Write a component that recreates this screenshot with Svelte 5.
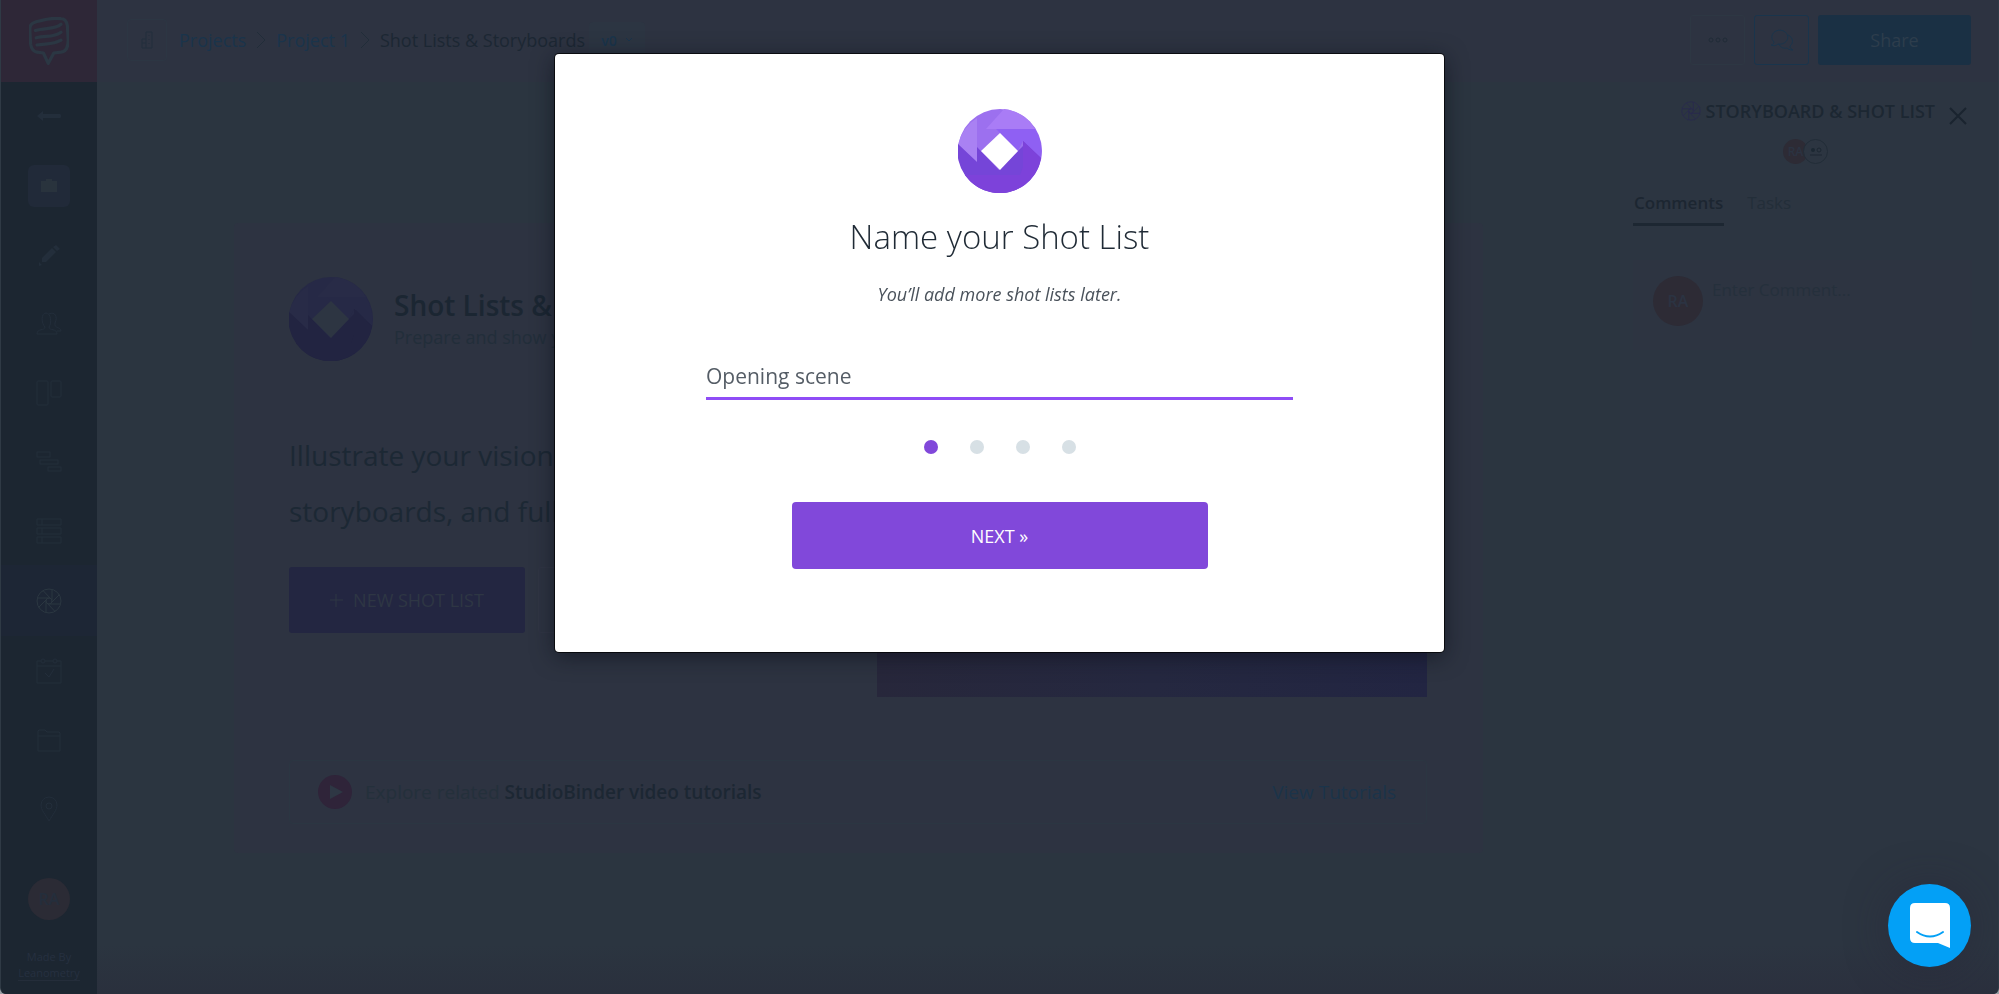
<script>
  let shotListName = $state('Opening scene');
  let step = $state(0);

  const steps = ['Name', 'Format', 'Import', 'Finish'];
  const crumbs = ['Projects', 'Project 1'];
  const navItems = [
    'back',
    'project',
    'write',
    'contacts',
    'boards',
    'timeline',
    'breakdown',
    'shots',
    'calendar',
    'files',
    'locations'
  ];

  function next() {
    step = Math.min(step + 1, steps.length - 1);
  }
</script>

{#snippet aperture()}
  <circle cx="13" cy="13" r="12" />
  <circle cx="13" cy="13" r="3" />
  <path d="M16 12V1.5M15 15 23.5 6.5M13 16H24.5M11 15l8 8.5M10 13v11.5M11 11 2.5 19.5M13 10H1.5M15 11 7 2.5" />
{/snippet}

{#snippet badge()}
  <circle class="tone-a" cx="42" cy="42" r="42" />
  <path class="tone-b" d="M0 36 19 53V9A42 42 0 0 0 0 36Z" />
  <path class="tone-c" d="M28 20H77A42 42 0 0 0 46 0Z" />
  <path class="tone-d" d="M38 20H77A42 42 0 0 1 83 49L65 32 60 42 42 24Z" />
  <path class="tone-e" d="M0 35 19 53V38L41 61 65 37V32L83 49A42 42 0 0 1 0 35Z" />
  <path class="tone-f" d="M7 66H37L62 66 65 58V32L83 49A42 42 0 0 1 7 66Z" />
  <path class="hole" d="M42 24 60 42 42 61 23 42Z" />
{/snippet}

<div class="app">
  <aside class="sidebar">
    <a class="brand" href="#home" aria-label="StudioBinder">
      <svg width="50" height="60" viewBox="0 0 50 60">
        <path d="M9 6C19 3 32 1 40 2c5 0 7 3 8 9l1 18c0 10-3 14-9 15l-9 1-7 13-6-13-8-1C6 43 3 40 2 34L1 16C1 10 3 8 9 6Z" />
        <path d="M8 17c12-4 24-1 32-8M9 26c12-3 22 0 31-7M10 35c11-2 20 0 30-6" />
      </svg>
    </a>
    <nav>
      {#each navItems as item}
        <a class="nav-item" class:active={item === 'shots'} class:boxed={item === 'project'} href="#{item}" aria-label={item}>
          <svg width="26" height="26" viewBox="0 0 26 26">
            {#if item === 'back'}
              <path class="fill" d="M1 12 7 7v3h17q1 0 1 2t-1 2H7v3Z" />
            {:else if item === 'project'}
              <path class="fill" d="M5 8h5V6h6v2h5v5H5ZM5 13h16v6H5Z" />
            {:else if item === 'write'}
              <path class="fill" d="M6 16 16 6l4 4L10 20H6ZM17 5l3-2 4 4-3 2ZM3 20l3 3-3 1Z" />
            {:else if item === 'contacts'}
              <path d="M1 23c0-6 8-3 8-7C5 12 5 2 10 2s6 10 3 14c0 4 8 1 8 7ZM13 3c6-3 9 3 6 9-1 6 5 3 6 8h-4" />
            {:else if item === 'boards'}
              <rect x="1" y="1" width="11" height="24" rx="1" />
              <rect x="15" y="1" width="10" height="16" rx="1" />
            {:else if item === 'timeline'}
              <rect x="1" y="3" width="13" height="5" />
              <rect x="4" y="11" width="18" height="4" />
              <rect x="12" y="18" width="13" height="4" />
            {:else if item === 'breakdown'}
              <path d="M1 1h24v6H1ZM1 10h24v6H1ZM1 19h24v6H1ZM6 1v6M6 10v6M6 19v6" />
            {:else if item === 'shots'}
              {@render aperture()}
            {:else if item === 'calendar'}
              <path d="M1 3h4M9 3h8M21 3h4v22H1V3M1 8h24M9 15l4 4 5-8" />
              <circle cx="7" cy="3" r="2" />
              <circle cx="19" cy="3" r="2" />
            {:else if item === 'files'}
              <path d="M2 24V4l1-1h6l2 2h12l1 1v18ZM2 9h22" />
            {:else}
              <path d="M13 25C9 18 5 14 5 9a8 8 0 0 1 16 0c0 5-4 9-8 16Z" />
              <circle cx="13" cy="10" r="3" />
            {/if}
          </svg>
        </a>
      {/each}
    </nav>
    <div class="avatar user">RA</div>
    <p class="made-by">Made By<br /><a href="#leanometry">Leanometry</a></p>
  </aside>

  <div class="workspace">
    <header class="topbar">
      <button class="building" aria-label="Company">
        <svg width="12" height="18" viewBox="0 0 12 18">
          <path d="M5 17V1h6v16ZM1 17V8h4M1 12h4M8 4v1M8 8v1M8 12v1M1 17h4" />
        </svg>
      </button>
      <nav class="crumbs">
        {#each crumbs as crumb}
          <a href="#projects">{crumb}</a>
          <svg width="10" height="18" viewBox="0 0 10 18"><path d="m1 1 8 8-8 8" /></svg>
        {/each}
        <span>Shot Lists &amp; Storyboards</span>
      </nav>
      <button class="version">
        v0
        <svg width="8" height="6" viewBox="0 0 8 6"><path d="m1 1 3 3 3-3" /></svg>
      </button>
      <div class="actions">
        <button class="more" aria-label="More">
          <svg width="20" height="6" viewBox="0 0 20 6">
            <circle cx="3" cy="3" r="2" />
            <circle cx="10" cy="3" r="2" />
            <circle cx="17" cy="3" r="2" />
          </svg>
        </button>
        <button class="chat" aria-label="Comments">
          <svg width="24" height="22" viewBox="0 0 24 22">
            <path d="M4 13a8 7 0 1 1 4 2C6 17 3 17 1 16c2 0 3-2 3-3ZM18 6c5 2 6 8 2 11 0 2 1 3 3 4-2 0-4 0-6-2-4 1-7-1-8-4" />
          </svg>
        </button>
        <button class="share">Share</button>
      </div>
    </header>

    <div class="columns">
      <main>
        <section class="card">
          <div class="intro">
            <div class="pitch">
              <div class="heading">
                <svg class="badge dim" width="84" height="84" viewBox="0 0 84 84">{@render badge()}</svg>
                <div>
                  <h1>Shot Lists &amp; Storyboards</h1>
                  <p>Prepare and show your vision</p>
                </div>
              </div>
              <p class="lead">Illustrate your vision with shot lists, storyboards, and full slideshows.</p>
              <div class="buttons">
                <button class="new">
                  <svg width="13" height="13" viewBox="0 0 13 13"><path d="M6 0v13M0 6h13" /></svg>
                  NEW SHOT LIST
                </button>
                <button class="tour">TAKE A TOUR</button>
              </div>
            </div>
            <div class="preview"></div>
          </div>
          <div class="tutorials">
            <svg width="34" height="34" viewBox="0 0 34 34">
              <circle cx="17" cy="17" r="17" />
              <path d="m12 10 13 7-13 7Z" />
            </svg>
            <p>Explore related <strong>StudioBinder video tutorials</strong></p>
            <a href="#tutorials">View Tutorials</a>
          </div>
        </section>
      </main>

      <aside class="panel">
        <div class="panel-title">
          <svg width="20" height="20" viewBox="0 0 26 26">{@render aperture()}</svg>
          <h2>STORYBOARD &amp; SHOT LIST</h2>
          <button class="close" aria-label="Close">
            <svg width="18" height="18" viewBox="0 0 18 18"><path d="m1 1 16 16M17 1 1 17" /></svg>
          </button>
        </div>
        <div class="members">
          <div class="avatar tiny">RA</div>
          <button class="add" aria-label="Members">
            <svg width="12" height="10" viewBox="0 0 12 10">
              <circle class="fill" cx="3" cy="3" r="2" />
              <circle cx="9" cy="3" r="2" />
              <path d="M0 8h12" />
            </svg>
          </button>
        </div>
        <div class="tabs">
          <button class="selected">Comments</button>
          <button>Tasks</button>
        </div>
        <div class="comment">
          <div class="avatar">RA</div>
          <textarea placeholder="Enter Comment..." aria-label="Comment"></textarea>
        </div>
      </aside>
    </div>
  </div>
</div>

<div class="overlay">
  <div class="modal" role="dialog" aria-modal="true" aria-labelledby="modal-title">
    <svg class="badge" width="84" height="84" viewBox="0 0 84 84">{@render badge()}</svg>
    <h2 id="modal-title">Name your Shot List</h2>
    <p>You’ll add more shot lists later.</p>
    <input type="text" aria-label="Shot list name" bind:value={shotListName} />
    <div class="dots">
      {#each steps as label, i}
        <button class:current={i === step} aria-label={label} onclick={() => (step = i)}></button>
      {/each}
    </div>
    <button class="next" onclick={next}>NEXT »</button>
  </div>
</div>

<button class="messenger" aria-label="Open messenger">
  <svg width="40" height="46" viewBox="0 0 40 46">
    <path class="bubble" d="M5 0h30q5 0 5 5v40L28 40H5q-5 0-5-5V5q0-5 5-5Z" />
    <path class="smile" d="M7 29q13 9 26 0" />
  </svg>
</button>

<style>
  :global(body) {
    background: #9aa0a6;
    font-family: 'Open Sans', sans-serif;
  }

  :global(*) {
    box-sizing: border-box;
  }

  h1,
  h2,
  p {
    margin: 0;
  }

  a {
    color: inherit;
    text-decoration: none;
  }

  button,
  input,
  textarea {
    font-family: inherit;
    margin: 0;
    padding: 0;
    border: 0;
    background: none;
    color: inherit;
  }

  button {
    display: flex;
    align-items: center;
    justify-content: center;
    cursor: pointer;
  }

  svg {
    display: block;
    flex: none;
    fill: none;
    stroke: currentColor;
  }

  .app {
    display: flex;
    min-height: 100vh;
    background: linear-gradient(#2b3540 calc(100% - 50px), #2a303d);
    border: solid #2f3a45;
    border-width: 0 1px;
    border-radius: 0 0 6px 6px;
    overflow: hidden;
  }

  .sidebar {
    width: 96px;
    flex: none;
    display: flex;
    flex-direction: column;
    align-items: center;
    background: #1c2631;
    color: #25303b;
  }

  .brand {
    width: 100%;
    height: 82px;
    display: flex;
    align-items: center;
    justify-content: center;
    background: #2e2737;
    color: #2b3743;
  }

  .brand svg {
    width: 40px;
    height: 48px;
    stroke-width: 4;
    stroke-linecap: round;
    stroke-linejoin: round;
  }

  .sidebar nav {
    width: 100%;
  }

  .nav-item {
    height: 69px;
    display: flex;
    align-items: center;
    justify-content: center;
    color: #232e3b;
  }

  .nav-item .fill,
  .add .fill {
    fill: currentColor;
    stroke: none;
  }

  .nav-item.active {
    height: 71px;
    background: #1d2635;
    color: #2b3741;
  }

  .nav-item.boxed svg {
    box-sizing: content-box;
    padding: 8px;
    border-radius: 6px;
    background: #212a39;
    color: #29333d;
  }

  .avatar {
    width: 50px;
    height: 50px;
    flex: none;
    display: flex;
    align-items: center;
    justify-content: center;
    border-radius: 50%;
    background: #2d2b35;
    color: #2b3342;
    font-size: 16px;
    font-weight: 600;
  }

  .avatar.user {
    width: 42px;
    height: 42px;
    margin-top: 35px;
    background: #2b2b35;
    color: #242e3c;
  }

  .made-by {
    margin-top: 29px;
    font-size: 11px;
    line-height: 16px;
    text-align: center;
    color: #263040;
  }

  .made-by a {
    border-bottom: 1px solid #242d3a;
  }

  .workspace {
    flex: 1;
    min-width: 0;
    display: flex;
    flex-direction: column;
  }

  .topbar {
    height: 82px;
    padding: 0 27px 2px 30px;
    display: flex;
    align-items: center;
    background: #2d3341;
    font-size: 18px;
  }

  .building {
    width: 40px;
    height: 42px;
    border: 1px solid #2c3643;
    border-radius: 4px;
    color: #222f3c;
  }

  .crumbs {
    margin-left: 12px;
    display: flex;
    align-items: center;
    gap: 10px;
    white-space: nowrap;
    color: #1a344b;
  }

  .crumbs svg {
    color: #212d39;
  }

  .crumbs span {
    color: #1c2733;
  }

  .version {
    width: 56px;
    height: 36px;
    margin-left: 4px;
    gap: 8px;
    border-radius: 4px;
    background: #2c3542;
    color: #1a344b;
    font-size: 14px;
    font-weight: 600;
  }

  .actions {
    margin-left: auto;
    display: flex;
    gap: 9px;
  }

  .actions button {
    width: 55px;
    height: 50px;
    border-radius: 3px;
    font-size: 18px;
  }

  .actions .more {
    border: 1px solid #2d3743;
    color: #202b37;
  }

  .actions .chat {
    border: 1px solid #1a354c;
    color: #1a354c;
  }

  .actions .share {
    width: 153px;
    background: #1a3044;
    color: #2d3d4c;
  }

  .columns {
    flex: 1;
    display: flex;
  }

  main {
    flex: 1;
    padding: 141px 137px;
    min-width: 0;
  }

  .card {
    padding: 54px 56px 29px 55px;
    border-radius: 4px;
    background: #2d3341;
  }

  .intro {
    display: flex;
    justify-content: space-between;
    gap: 40px;
  }

  .pitch {
    width: 530px;
  }

  .heading {
    display: flex;
    align-items: center;
    gap: 21px;
    white-space: nowrap;
  }

  h1 {
    font-size: 28px;
    font-weight: 600;
    line-height: 36px;
    color: #1b2632;
  }

  .heading p {
    font-size: 18px;
    line-height: 28px;
    color: #222e3a;
  }

  .lead {
    margin: 66px 0 28px;
    font-size: 28px;
    line-height: 56px;
    color: #1c2834;
  }

  .buttons {
    display: flex;
    gap: 13px;
  }

  .buttons button {
    width: 236px;
    height: 66px;
    gap: 10px;
    border-radius: 3px;
    font-size: 18px;
  }

  .buttons .new {
    background: #232641;
    color: #2e3644;
  }

  .buttons .tour {
    border: 1px solid #303544;
    color: #232642;
  }

  .preview {
    width: 550px;
    height: 420px;
    background: linear-gradient(90deg, #27273b, #252840 50%, #222542);
  }

  .tutorials {
    height: 64px;
    margin-top: 63px;
    padding: 0 30px 0 28px;
    display: flex;
    align-items: center;
    gap: 13px;
    border: 1px solid #2b3642;
    border-radius: 4px;
    font-size: 19px;
    color: #24303b;
  }

  .tutorials circle {
    fill: #2f2439;
    stroke: none;
  }

  .tutorials path {
    fill: #2e3744;
    stroke: none;
  }

  .tutorials strong {
    font-weight: 600;
    color: #1c2733;
  }

  .tutorials a {
    margin-left: auto;
    color: #1b344a;
  }

  .panel {
    width: 378px;
    flex: none;
    padding: 14px 26px 0 13px;
    background: linear-gradient(#2c3541 calc(100% - 50px), #2b303e);
    color: #1c2732;
  }

  .panel-title {
    display: flex;
    align-items: center;
    justify-content: flex-end;
    gap: 5px;
    padding-right: 2px;
    line-height: 30px;
  }

  .panel-title > svg {
    color: #28284f;
  }

  .panel h2 {
    font-size: 18px;
    font-weight: 600;
    white-space: nowrap;
  }

  .close {
    width: 24px;
    height: 28px;
    margin-left: 6px;
    align-items: flex-end;
    color: #1a242f;
  }

  .close svg {
    stroke-width: 2;
  }

  .members {
    margin-top: 13px;
    display: flex;
    justify-content: center;
    padding-left: 6px;
  }

  .avatar.tiny {
    width: 25px;
    height: 25px;
    font-size: 12px;
  }

  .add {
    width: 25px;
    height: 25px;
    margin-left: -5px;
    border: 1px solid #222d38;
    border-radius: 50%;
    background: #2c3541;
  }

  .tabs {
    display: flex;
    gap: 22px;
    margin-top: 18px;
  }

  .tabs button {
    height: 44px;
    padding: 0 1px;
    border-bottom: 3px solid transparent;
    font-size: 17px;
    color: #232e39;
  }

  .tabs .selected {
    border-color: #1d2732;
    font-weight: 600;
    color: #1c2631;
  }

  .comment {
    margin-top: 34px;
    padding: 16px 20px;
    display: flex;
    gap: 9px;
    background: #2d3441;
  }

  .comment textarea {
    flex: 1;
    min-width: 0;
    height: 58px;
    padding-top: 3px;
    resize: none;
    outline: none;
    font-size: 17px;
    line-height: 22px;
  }

  .comment textarea::placeholder {
    color: #25303c;
    opacity: 1;
  }

  .overlay {
    position: fixed;
    inset: 0;
    padding-top: 54px;
    display: flex;
    align-items: flex-start;
    justify-content: center;
  }

  .modal {
    width: 889px;
    padding: 55px 151px 83px;
    display: flex;
    flex-direction: column;
    align-items: center;
    border-radius: 4px;
    background: #fff;
    box-shadow:
      0 0 0 1px rgba(0, 0, 0, 0.7),
      0 4px 22px rgba(10, 14, 24, 0.6);
  }

  .badge {
    stroke: none;
  }

  .tone-a {
    fill: #9c70ef;
  }

  .tone-b {
    fill: #a981f3;
  }

  .tone-c {
    fill: #a97cf6;
  }

  .tone-d {
    fill: #8f60f3;
  }

  .tone-e {
    fill: #7545d8;
  }

  .tone-f {
    fill: #7d42da;
  }

  .hole {
    fill: #fff;
  }

  .dim .tone-a,
  .dim .tone-d {
    fill: #262946;
  }

  .dim .tone-b,
  .dim .tone-c {
    fill: #282b47;
  }

  .dim .tone-e,
  .dim .tone-f {
    fill: #222441;
  }

  .dim .hole {
    fill: #2d3542;
  }

  .modal h2 {
    margin-top: 20px;
    font-size: 33px;
    font-weight: 300;
    line-height: 48px;
    color: #1f2a35;
  }

  .modal p {
    margin-top: 20px;
    font-size: 18px;
    font-style: italic;
    line-height: 26px;
    color: #4a525b;
  }

  .modal input {
    width: 100%;
    height: 46px;
    margin-top: 47px;
    border-bottom: 3px solid #8f4df6;
    outline: none;
    font-size: 21px;
    color: #555d66;
  }

  .dots {
    display: flex;
    gap: 32px;
    margin-top: 40px;
  }

  .dots button {
    width: 14px;
    height: 14px;
    border-radius: 50%;
    background: #d7e0e5;
  }

  .dots .current {
    background: #8148da;
  }

  .next {
    width: 416px;
    height: 67px;
    margin-top: 48px;
    border-radius: 4px;
    background: #8148da;
    color: #fff;
    font-size: 18px;
  }

  .messenger {
    position: fixed;
    right: 28px;
    bottom: 27px;
    width: 83px;
    height: 83px;
    border-radius: 50%;
    background: #03a0f6;
    box-shadow: 0 2px 40px rgba(40, 38, 56, 0.5);
  }

  .bubble {
    fill: #fff;
    stroke: none;
  }

  .smile {
    stroke: #03a0f6;
    stroke-width: 2;
    stroke-linecap: round;
  }
</style>
